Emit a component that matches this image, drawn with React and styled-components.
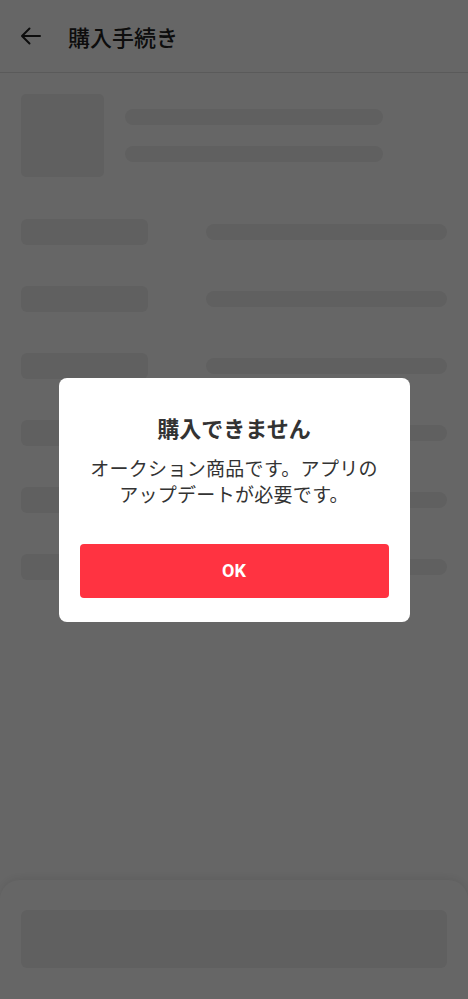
import React from 'react';
import styled, { createGlobalStyle } from 'styled-components';

const GlobalStyle = createGlobalStyle`
  * { box-sizing: border-box; }
  html, body { margin: 0; padding: 0; height: 100%; }
  body {
    font-family: "Noto Sans CJK JP", "Noto Sans", Roboto, sans-serif;
    background: #ffffff;
    color: #222222;
  }
  #root { height: 100%; }
`;

const Page = styled.div`
  height: 100vh;
  display: flex;
  flex-direction: column;
  background: #ffffff;
  overflow: hidden;
`;

const Header = styled.header`
  height: 73px;
  flex-shrink: 0;
  display: flex;
  align-items: center;
  padding: 0 19px;
  gap: 25px;
  border-bottom: 1px solid #e1e1e1;
`;

const BackButton = styled.button`
  border: 0;
  background: none;
  padding: 0;
  width: 24px;
  height: 24px;
  display: flex;
  align-items: center;
  justify-content: center;
  color: #222222;
`;

const HeaderTitle = styled.h1`
  margin: 0;
  font-size: 22px;
  font-weight: 500;
  color: #222222;
`;

const Content = styled.main`
  flex: 1;
  padding: 21px 21px 0;
  display: flex;
  flex-direction: column;
`;

const ItemRow = styled.div`
  display: flex;
  gap: 21px;
  margin-bottom: 42px;
`;

const Thumb = styled.div`
  width: 83px;
  height: 83px;
  border-radius: 5px;
  background: #f0f0f0;
  flex-shrink: 0;
`;

const ItemLines = styled.div`
  padding-top: 15px;
  display: flex;
  flex-direction: column;
  gap: 21px;
`;

const Bar = styled.div`
  width: ${({ $w }) => $w};
  height: ${({ $h }) => $h || 16}px;
  border-radius: ${({ $r }) => $r || 8}px;
  background: #f0f0f0;
`;

const Rows = styled.div`
  display: flex;
  flex-direction: column;
  gap: 41px;
`;

const Row = styled.div`
  display: flex;
  align-items: center;
  justify-content: space-between;
  height: 26px;
`;

const Sheet = styled.footer`
  flex-shrink: 0;
  height: 119px;
  padding: 30px 21px 31px;
  border-radius: 20px 20px 0 0;
  background: #ffffff;
  box-shadow: 0 -2px 8px rgba(0, 0, 0, 0.08);
`;

const SheetButton = styled.div`
  height: 58px;
  border-radius: 6px;
  background: #f0f0f0;
`;

const Overlay = styled.div`
  position: fixed;
  inset: 0;
  background: rgba(0, 0, 0, 0.6);
  display: flex;
  align-items: center;
  justify-content: center;
`;

const Dialog = styled.div`
  width: 351px;
  background: #ffffff;
  border-radius: 8px;
  padding: 34px 21px 24px;
  text-align: center;
`;

const DialogTitle = styled.h2`
  margin: 0 0 13px;
  font-size: 22px;
  line-height: 30px;
  font-weight: 700;
  color: #333333;
`;

const DialogMessage = styled.p`
  margin: 0 0 37px;
  font-size: 19px;
  line-height: 26px;
  letter-spacing: 0.3px;
  font-weight: 400;
  color: #333333;
`;

const OkButton = styled.button`
  width: 100%;
  height: 54px;
  border: 0;
  border-radius: 4px;
  background: #ff3341;
  color: #ffffff;
  font-family: Roboto, "Noto Sans", sans-serif;
  font-size: 18px;
  font-weight: 700;
`;

const rows = [0, 1, 2, 3, 4, 5];

export default function App() {
  return (
    <>
      <GlobalStyle />
      <Page>
        <Header>
          <BackButton aria-label="戻る">
            <svg width="24" height="24" viewBox="0 0 24 24" fill="none">
              <path d="M21 12H3.5M10.5 4.5L3 12l7.5 7.5" stroke="currentColor" strokeWidth="2" strokeLinecap="round" strokeLinejoin="round" />
            </svg>
          </BackButton>
          <HeaderTitle>購入手続き</HeaderTitle>
        </Header>
        <Content>
          <ItemRow>
            <Thumb />
            <ItemLines>
              <Bar $w="258px" />
              <Bar $w="258px" />
            </ItemLines>
          </ItemRow>
          <Rows>
            {rows.map((r) => (
              <Row key={r}>
                <Bar $w="127px" $h={26} $r={6} />
                <Bar $w="241px" />
              </Row>
            ))}
          </Rows>
        </Content>
        <Sheet>
          <SheetButton />
        </Sheet>
      </Page>
      <Overlay>
        <Dialog role="dialog">
          <DialogTitle>購入できません</DialogTitle>
          <DialogMessage>
            オークション商品です。アプリの
            <br />
            アップデートが必要です。
          </DialogMessage>
          <OkButton>OK</OkButton>
        </Dialog>
      </Overlay>
    </>
  );
}
